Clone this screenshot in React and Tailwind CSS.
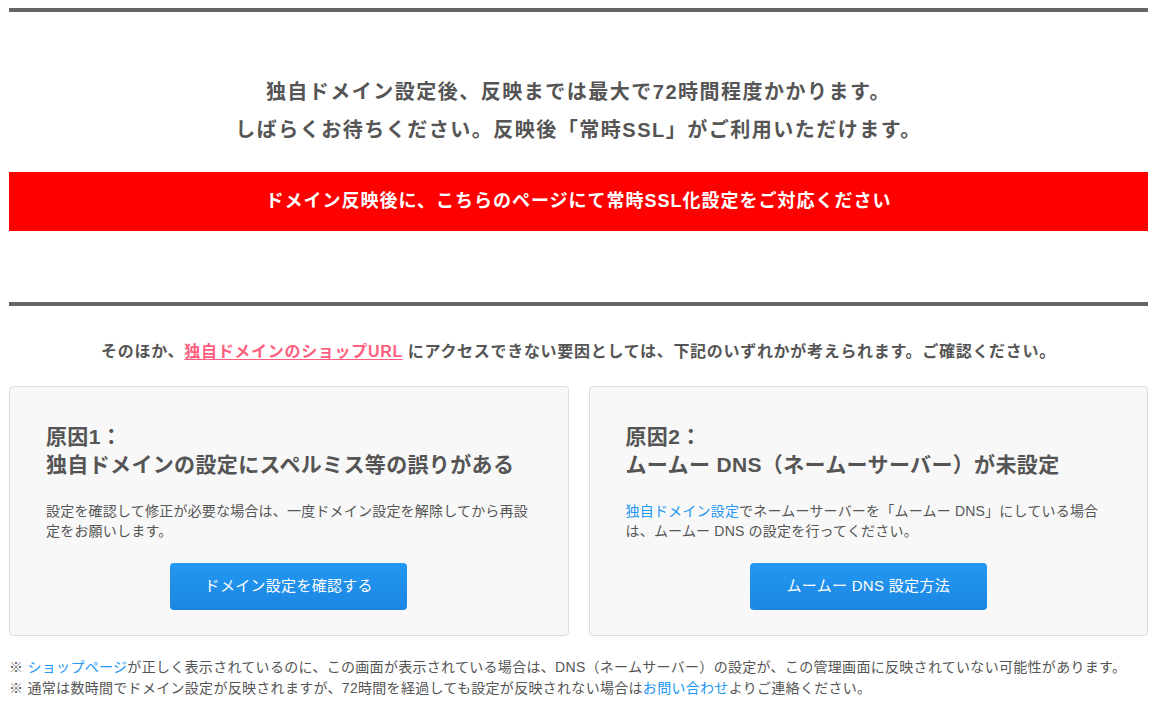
const font = { fontFamily: '"Liberation Sans", "Noto Sans CJK JP", sans-serif' };

const Bar = ({ className = "" }) => <div className={`h-[4px] w-full bg-[#666666] ${className}`} />;

const CauseCard = ({ title, children, button }) => (
    <div className="rounded-[4px] border border-[#dddddd] bg-[#f8f8f8] px-[36px] pt-[36px] pb-[25px]">
        <h3 className="text-[21px] font-bold leading-[28px] tracking-[0.35px] text-[#555555]">{title}</h3>
        <p className="mt-[22px] text-[14px] leading-[20px] tracking-[0.2px] text-[#555555]">{children}</p>
        <div className="mt-[22px] flex justify-center">
            <button className="h-[47px] w-[237px] rounded-[4px] bg-gradient-to-b from-[#2398f2] to-[#1c86e2] text-[15px] tracking-[0.3px] text-white">
                {button}
            </button>
        </div>
    </div>
);

export default function App() {
    return (
        <div className="min-h-screen bg-white" style={font}>
            <div className="ml-[9px] w-[1139px] pt-[8px]">
                <Bar />

                {/* reflection notice */}
                <div className="mt-[61px] text-center text-[20px] font-bold leading-[38px] tracking-[1.5px] text-[#555555]">
                    <p>独自ドメイン設定後、反映までは最大で72時間程度かかります。</p>
                    <p>しばらくお待ちください。反映後「常時SSL」がご利用いただけます。</p>
                </div>
                <div className="mt-[23px] flex h-[59px] items-center justify-center bg-[#ff0000] text-[18px] font-bold tracking-[1px] text-white">
                    ドメイン反映後に、こちらのページにて常時SSL化設定をご対応ください
                </div>

                <Bar className="mt-[71px]" />

                <p className="mt-[34px] text-center text-[16px] font-bold leading-[24px] tracking-[0.7px] text-[#555555]">
                    そのほか、
                    <a href="#" className="text-[#ff5f7f] underline underline-offset-2">独自ドメインのショップURL</a>
                    {" "}にアクセスできない要因としては、下記のいずれかが考えられます。ご確認ください。
                </p>

                <div className="mt-[22px] grid grid-cols-2 gap-5">
                    <CauseCard
                        title={<>原因1：<br />独自ドメインの設定にスペルミス等の誤りがある</>}
                        button="ドメイン設定を確認する"
                    >
                        設定を確認して修正が必要な場合は、一度ドメイン設定を解除してから再設定をお願いします。
                    </CauseCard>
                    <CauseCard
                        title={<>原因2：<br />ムームー DNS（ネームーサーバー）が未設定</>}
                        button="ムームー DNS 設定方法"
                    >
                        <a href="#" className="text-[#2196f3]">独自ドメイン設定</a>
                        でネームーサーバーを「ムームー DNS」にしている場合は、ムームー DNS の設定を行ってください。
                    </CauseCard>
                </div>

                <div className="mt-[21px] text-[14px] leading-[21px] tracking-[0.3px] text-[#555555]">
                    <p>
                        ※ <a href="#" className="text-[#2196f3]">ショップページ</a>
                        が正しく表示されているのに、この画面が表示されている場合は、DNS（ネームサーバー）の設定が、この管理画面に反映されていない可能性があります。
                    </p>
                    <p>
                        ※ 通常は数時間でドメイン設定が反映されますが、72時間を経過しても設定が反映されない場合は
                        <a href="#" className="text-[#2196f3]">お問い合わせ</a>
                        よりご連絡ください。
                    </p>
                </div>
            </div>
        </div>
    );
}
